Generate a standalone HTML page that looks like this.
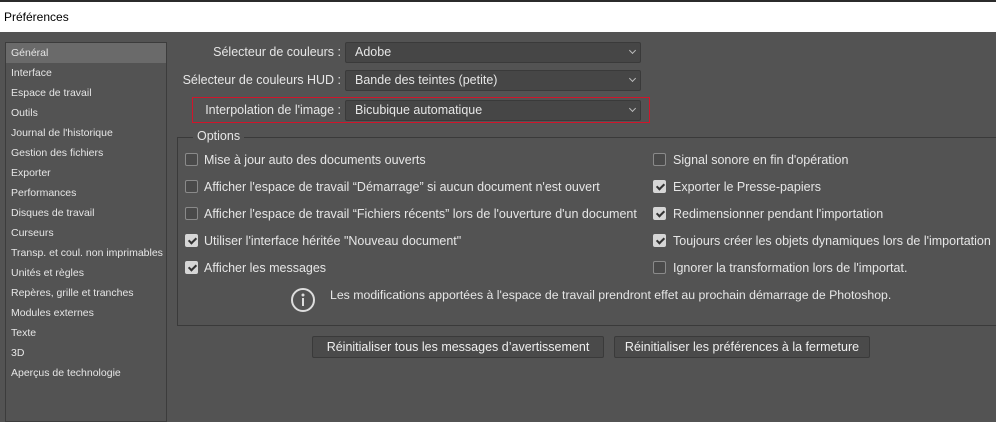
<!DOCTYPE html><html><head><meta charset="utf-8"><style>
*{margin:0;padding:0;box-sizing:border-box}
body{width:996px;height:409px;background:#535353;font-family:"Liberation Sans",sans-serif;color:#e6e6e6;position:relative;overflow:hidden}
.title{position:absolute;left:0;top:0;width:996px;height:32px;background:#fff;border-top:2px solid #2b2b2b;color:#000;font-size:12px;padding:8px 0 0 4px}
.list{position:absolute;left:5px;top:42px;width:162px;height:380px;border:1px solid #3c3c3c;font-size:10.5px}
.list div{height:20px;line-height:20px;padding-left:5px;white-space:nowrap}
.list .sel{background:#6a6a6a}
.abs{position:absolute;white-space:nowrap}
.lbl{font-size:12.5px;text-align:right;width:200px}
.dd{position:absolute;left:345px;width:296px;height:21px;background:#464646;border:1px solid #3a3a3a;border-radius:2px;font-size:12.5px;padding:2px 0 0 9px}
.dd:after{content:"";position:absolute;right:5px;top:5px;width:4px;height:4px;border-right:1px solid #bbb;border-bottom:1px solid #bbb;transform:rotate(45deg)}
.grp{position:absolute;left:177px;top:137px;width:830px;height:189px;border:1px solid #3a3a3a}
.cb{position:absolute;width:13px;height:13px;border:1px solid #8a8a8a;border-radius:2px;background:#4a4a4a}
.cb.on{background:#d6d6d6;border-color:#d6d6d6}
.cb.on:after{content:"";position:absolute;left:3.5px;top:1px;width:3px;height:6px;border-right:2px solid #333;border-bottom:2px solid #333;transform:rotate(45deg)}
.t{position:absolute;font-size:12.5px;white-space:nowrap}
.btn{position:absolute;top:336px;height:22px;background:#4a4a4a;border:1px solid #3a3a3a;border-radius:2px;font-size:12.5px;text-align:center;line-height:20px;color:#eee}
</style></head><body>
<div class="title">Préférences</div>
<div class="list">
<div class="sel">Général</div><div>Interface</div><div>Espace de travail</div><div>Outils</div><div>Journal de l'historique</div><div>Gestion des fichiers</div><div>Exporter</div><div>Performances</div><div>Disques de travail</div><div>Curseurs</div><div>Transp. et coul. non imprimables</div><div>Unités et règles</div><div>Repères, grille et tranches</div><div>Modules externes</div><div>Texte</div><div>3D</div><div>Aperçus de technologie</div>
</div>
<div class="abs lbl" style="left:141px;top:45px">Sélecteur de couleurs :</div>
<div class="abs lbl" style="left:141px;top:73px">Sélecteur de couleurs HUD :</div>
<div class="abs" style="left:192px;top:97px;width:458px;height:26px;border:1px solid #d0152b"></div>
<div class="abs lbl" style="left:141px;top:103px">Interpolation de l'image :</div>
<div class="dd" style="top:42px">Adobe</div>
<div class="dd" style="top:70px">Bande des teintes (petite)</div>
<div class="dd" style="top:100px">Bicubique automatique</div>
<div class="grp"></div>
<div class="t" style="left:193px;top:129px;background:#535353;padding:0 4px">Options</div>
<div class="cb" style="left:185px;top:153px"></div><div class="t" style="left:204px;top:153px">Mise à jour auto des documents ouverts</div>
<div class="cb" style="left:185px;top:180px"></div><div class="t" style="left:204px;top:180px">Afficher l'espace de travail “Démarrage” si aucun document n'est ouvert</div>
<div class="cb" style="left:185px;top:207px"></div><div class="t" style="left:204px;top:207px">Afficher l'espace de travail “Fichiers récents” lors de l'ouverture d'un document</div>
<div class="cb on" style="left:185px;top:234px"></div><div class="t" style="left:204px;top:234px">Utiliser l'interface héritée "Nouveau document"</div>
<div class="cb on" style="left:185px;top:261px"></div><div class="t" style="left:204px;top:261px">Afficher les messages</div>
<div class="cb" style="left:653px;top:153px"></div><div class="t" style="left:673px;top:153px">Signal sonore en fin d'opération</div>
<div class="cb on" style="left:653px;top:180px"></div><div class="t" style="left:673px;top:180px">Exporter le Presse-papiers</div>
<div class="cb on" style="left:653px;top:207px"></div><div class="t" style="left:673px;top:207px">Redimensionner pendant l'importation</div>
<div class="cb on" style="left:653px;top:234px"></div><div class="t" style="left:673px;top:234px">Toujours créer les objets dynamiques lors de l'importation</div>
<div class="cb" style="left:653px;top:261px"></div><div class="t" style="left:673px;top:261px">Ignorer la transformation lors de l'importat.</div>
<svg class="abs" style="left:290px;top:287px" width="26" height="26" viewBox="0 0 26 26"><circle cx="13" cy="13" r="11" fill="none" stroke="#ddd" stroke-width="2"/><circle cx="13" cy="8" r="1.5" fill="#ddd"/><rect x="12" y="11" width="2" height="8" fill="#ddd"/></svg>
<div class="t" style="left:330px;top:288px;font-size:12.3px">Les modifications apportées à l'espace de travail prendront effet au prochain démarrage de Photoshop.</div>
<div class="btn" style="left:312px;width:292px">Réinitialiser tous les messages d’avertissement</div>
<div class="btn" style="left:614px;width:256px">Réinitialiser les préférences à la fermeture</div>
</body></html>
